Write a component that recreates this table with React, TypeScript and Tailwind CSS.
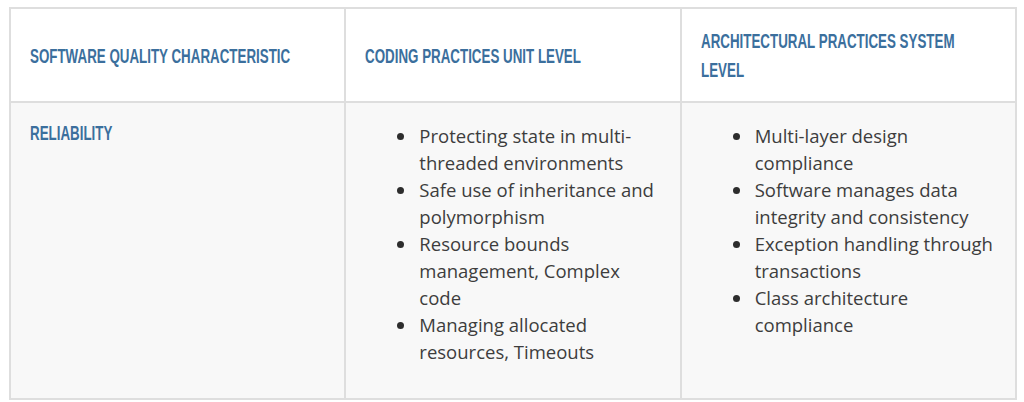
import React from 'react';

const unitLevel = [
  ['Protecting state in multi-', 'threaded environments'],
  ['Safe use of inheritance and', 'polymorphism'],
  ['Resource bounds', 'management, Complex', 'code'],
  ['Managing allocated', 'resources, Timeouts'],
];

const systemLevel = [
  ['Multi-layer design', 'compliance'],
  ['Software manages data', 'integrity and consistency'],
  ['Exception handling through', 'transactions'],
  ['Class architecture', 'compliance'],
];

// condensed caps label (Oswald look-alike)
function Caps({ lines }: { lines: string[] }) {
  return (
    <div className="overflow-hidden">
      <span className="inline-block origin-left scale-x-[0.636] whitespace-nowrap font-['Liberation_Sans',sans-serif] font-bold text-[21px] leading-[29px] text-[#3b6f9d] uppercase">
        {lines.map((line, i) => (
          <React.Fragment key={i}>
            {i > 0 && <br />}
            {line}
          </React.Fragment>
        ))}
      </span>
    </div>
  );
}

function BulletList({ items }: { items: string[][] }) {
  return (
    <ul className="list-disc pl-[52px] marker:text-[#2d2d2d]">
      {items.map((lines, i) => (
        <li key={i} className="pl-[2px]">
          {lines.map((line, j) => (
            <React.Fragment key={j}>
              {j > 0 && <br />}
              {line}
            </React.Fragment>
          ))}
        </li>
      ))}
    </ul>
  );
}

export default function App() {
  return (
    <div className="bg-white w-[1024px] h-[402px] pt-[7px] pl-[9px] overflow-hidden">
      <table className="w-[1008px] table-fixed border-collapse border-2 border-[#dedede]">
        <thead>
          <tr className="bg-white h-[94px]">
            <th className="w-1/3 border-2 border-[#dedede] px-[19px] text-left align-middle font-normal">
              <Caps lines={['Software Quality Characteristic']} />
            </th>
            <th className="w-1/3 border-2 border-[#dedede] px-[19px] text-left align-middle font-normal">
              <Caps lines={['Coding Practices Unit Level']} />
            </th>
            <th className="w-1/3 border-2 border-[#dedede] px-[19px] text-left align-middle font-normal">
              <Caps lines={['Architectural Practices System', 'Level']} />
            </th>
          </tr>
        </thead>
        <tbody>
          <tr className="bg-[#f8f8f8] h-[297px] align-top text-[18.5px] leading-[27px] text-[#3d3d3d] font-['Open_Sans',sans-serif]">
            <td className="border-2 border-[#dedede] px-[19px] pt-[15px]">
              <Caps lines={['Reliability']} />
            </td>
            <td className="border-2 border-[#dedede] px-[19px] pt-[19px]">
              <BulletList items={unitLevel} />
            </td>
            <td className="border-2 border-[#dedede] px-[19px] pt-[19px]">
              <BulletList items={systemLevel} />
            </td>
          </tr>
        </tbody>
      </table>
    </div>
  );
}
